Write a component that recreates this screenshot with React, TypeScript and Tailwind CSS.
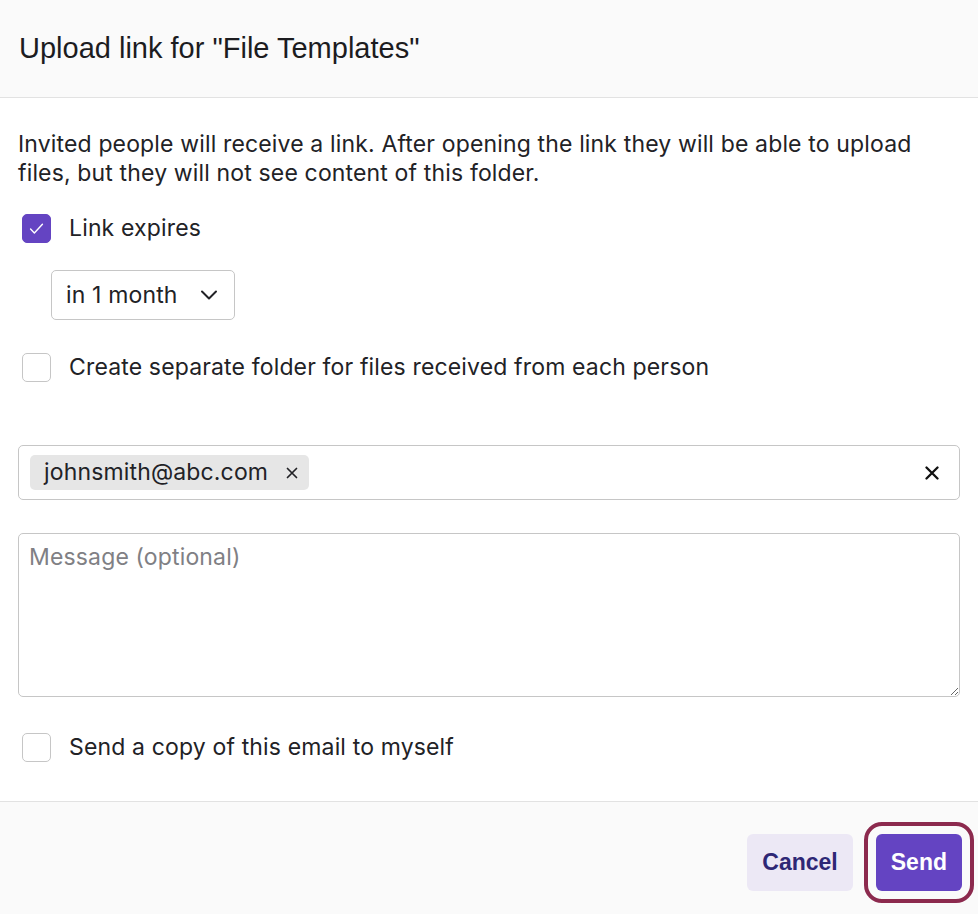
import React, { useState } from 'react';

const Checkbox: React.FC<{ checked: boolean; onToggle: () => void }> = ({ checked, onToggle }) => (
  <button
    type="button"
    onClick={onToggle}
    className={`ml-[4px] flex h-[29px] w-[29px] shrink-0 items-center justify-center rounded-[5px] border ${
      checked ? 'border-[#6444c2] bg-[#6444c2]' : 'border-[#c6c6c6] bg-white'
    }`}
  >
    {checked && (
      <svg width="19" height="19" viewBox="0 0 16 16" fill="none">
        <path d="M3 8.5l3.2 3.2L13 4.5" stroke="white" strokeWidth="1.2" strokeLinecap="round" strokeLinejoin="round" />
      </svg>
    )}
  </button>
);

const CheckRow: React.FC<{ label: string; checked: boolean; onToggle: () => void; className?: string }> = ({
  label,
  checked,
  onToggle,
  className,
}) => (
  <div className={`flex items-center gap-[18px] ${className ?? ''}`}>
    <Checkbox checked={checked} onToggle={onToggle} />
    <span className="text-[23px] leading-[29px] tracking-[0.15px] text-[#222226]">{label}</span>
  </div>
);

export default function App() {
  const [expires, setExpires] = useState(true);
  const [separate, setSeparate] = useState(false);
  const [copy, setCopy] = useState(false);
  const [emails, setEmails] = useState(['johnsmith@abc.com']);

  return (
    <div className="flex min-h-[914px] w-[978px] flex-col bg-white font-['Inter','Noto_Sans',sans-serif]">
      <div className="flex h-[98px] items-center border-b border-[#e2e2e2] bg-[#fafafa] px-[19px]">
        <h1 className="font-['Liberation_Sans',Arial,sans-serif] text-[29px] text-[#1c1c1f]">
          Upload link for "File Templates"
        </h1>
      </div>

      <div className="flex flex-col px-[18px] pb-[39px] pt-[32px]">
        <p className="text-[23px] leading-[29px] tracking-[0.15px] text-[#222226]">
          Invited people will receive a link. After opening the link they will be able to upload files, but they will
          not see content of this folder.
        </p>

        <CheckRow className="mt-[26px]" label="Link expires" checked={expires} onToggle={() => setExpires(!expires)} />

        <div className="ml-[33px] mt-[27px] flex h-[50px] w-[184px] items-center justify-between rounded-[5px] border border-[#c6c6c6] pl-[14px] pr-[15px]">
          <span className="text-[23px] tracking-[0.15px] text-[#222226]">in 1 month</span>
          <svg width="20" height="20" viewBox="0 0 20 20" fill="none">
            <path d="M3 6.5l7 7 7-7" stroke="#222226" strokeWidth="2" strokeLinecap="round" strokeLinejoin="round" />
          </svg>
        </div>

        <CheckRow
          className="mt-[33px]"
          label="Create separate folder for files received from each person"
          checked={separate}
          onToggle={() => setSeparate(!separate)}
        />

        <div className="mt-[63px] flex h-[55px] items-center rounded-[5px] border border-[#c6c6c6] pl-[11px] pr-[20px]">
          <div className="flex flex-1 items-center gap-2">
            {emails.map(e => (
              <div key={e} className="flex h-[35px] items-center rounded-[5px] bg-[#e6e6e6] pl-[14px] pr-[11px]">
                <span className="text-[23px] tracking-[0.15px] text-[#222226]">{e}</span>
                <button
                  type="button"
                  className="ml-[18px] text-[#222226]"
                  onClick={() => setEmails(emails.filter(x => x !== e))}
                >
                  <svg width="12" height="12" viewBox="0 0 12 12">
                    <path d="M1.5 1.5l9 9M10.5 1.5l-9 9" stroke="currentColor" strokeWidth="1.7" strokeLinecap="round" />
                  </svg>
                </button>
              </div>
            ))}
          </div>
          <button type="button" onClick={() => setEmails([])}>
            <svg width="14" height="14" viewBox="0 0 14 14">
              <path d="M1.5 1.5l11 11M12.5 1.5l-11 11" stroke="#111" strokeWidth="2.3" strokeLinecap="round" />
            </svg>
          </button>
        </div>

        <textarea
          placeholder="Message (optional)"
          className="mt-[33px] h-[164px] w-full rounded-[5px] border border-[#c6c6c6] px-[10px] py-[9px] text-[23px] leading-[29px] tracking-[0.15px] text-[#222226] outline-none placeholder:text-[#808084]"
        />

        <CheckRow
          className="mt-[36px]"
          label="Send a copy of this email to myself"
          checked={copy}
          onToggle={() => setCopy(!copy)}
        />
      </div>

      <div className="flex flex-1 items-start justify-end gap-[23px] border-t border-[#e2e2e2] bg-[#fafafa] pr-[16px] pt-[32px]">
        <button
          type="button"
          className="h-[57px] rounded-[6px] bg-[#ece8f5] px-[15px] font-['Liberation_Sans',Arial,sans-serif] text-[23px] font-bold text-[#2e2775]"
        >
          Cancel
        </button>
        <button
          type="button"
          className="h-[57px] rounded-[6px] bg-[#6444c2] px-[15px] font-['Liberation_Sans',Arial,sans-serif] text-[23px] font-bold text-white outline-4 outline-offset-8 outline-[#8c2a4e]"
        >
          Send
        </button>
      </div>
    </div>
  );
}
